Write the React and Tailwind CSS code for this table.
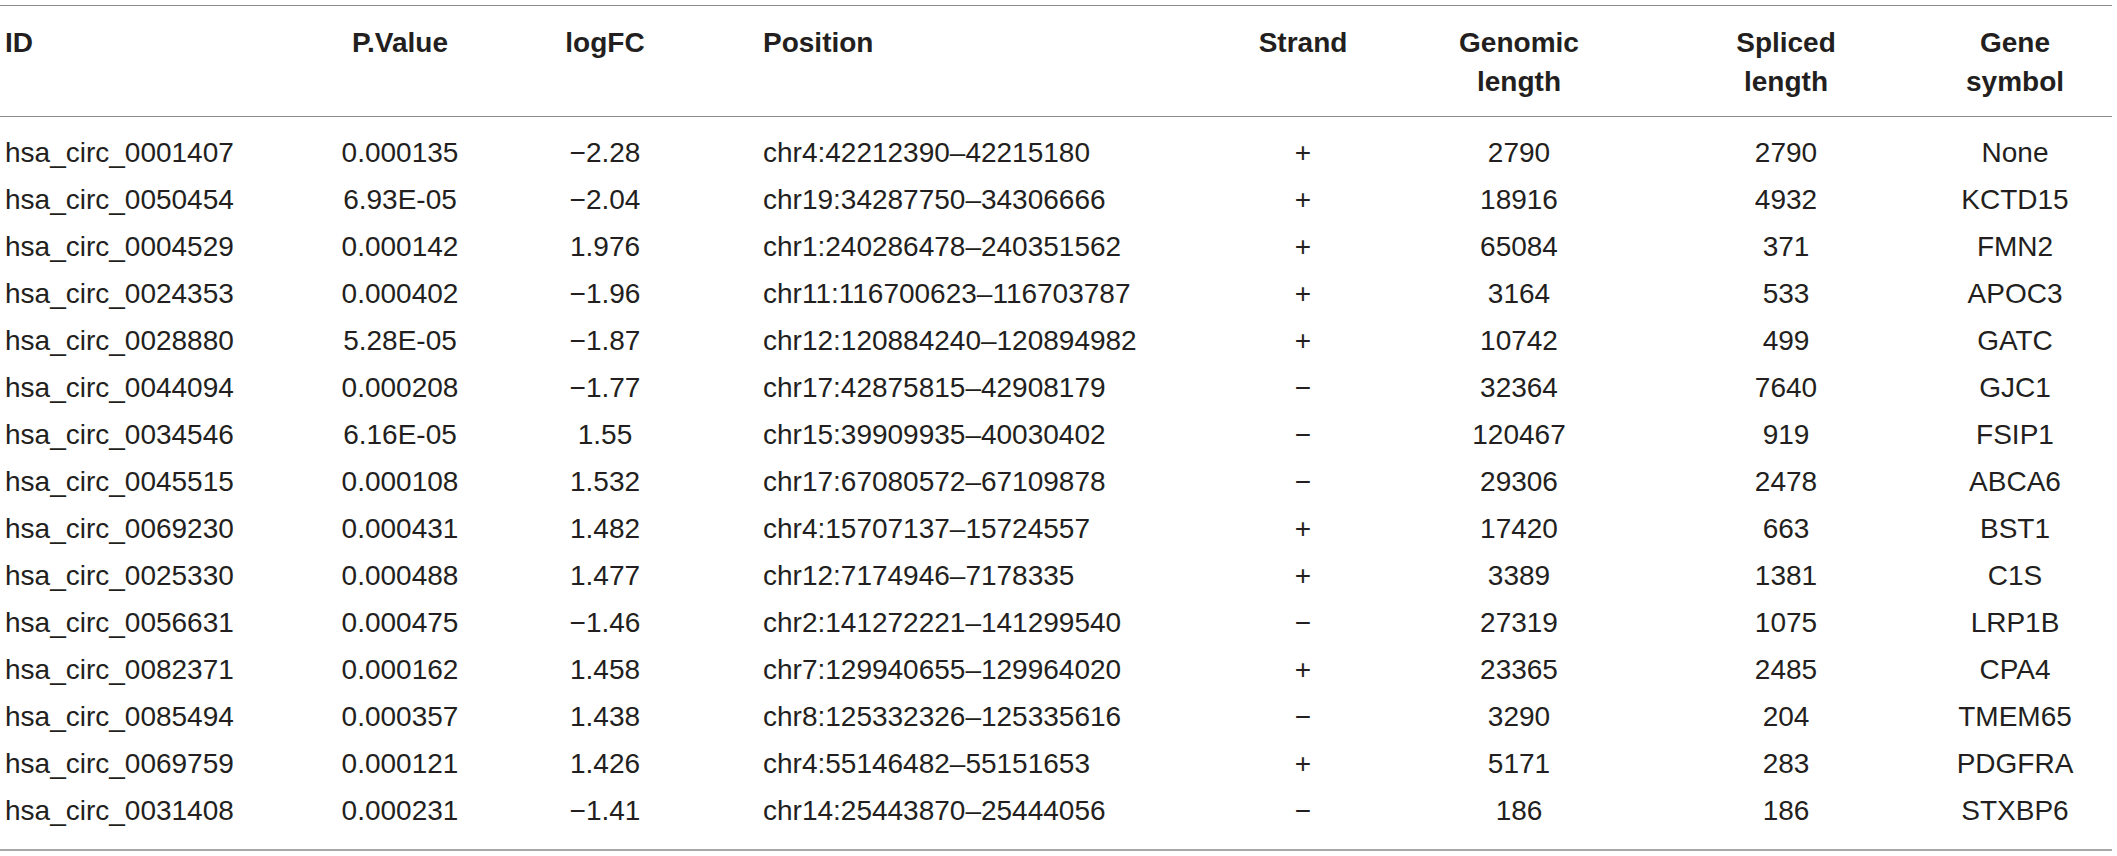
import React from 'react';

const cols = [
  { label: ['ID'], w: 'w-[300px]', cell: 'text-left pl-[5px]' },
  { label: ['P.Value'], w: 'w-[200px]', cell: 'text-center' },
  { label: ['logFC'], w: 'w-[210px]', cell: 'text-center' },
  { label: ['Position'], w: 'w-[490px]', cell: 'text-left pl-[53px]' },
  { label: ['Strand'], w: 'w-[206px]', cell: 'text-center' },
  { label: ['Genomic', 'length'], w: 'w-[226px]', cell: 'text-center' },
  { label: ['Spliced', 'length'], w: 'w-[308px]', cell: 'text-center' },
  { label: ['Gene', 'symbol'], w: 'w-[172px]', cell: 'text-center pr-[22px]' },
];

const rows = [
  ['hsa_circ_0001407', '0.000135', '−2.28', 'chr4:42212390–42215180', '+', '2790', '2790', 'None'],
  ['hsa_circ_0050454', '6.93E-05', '−2.04', 'chr19:34287750–34306666', '+', '18916', '4932', 'KCTD15'],
  ['hsa_circ_0004529', '0.000142', '1.976', 'chr1:240286478–240351562', '+', '65084', '371', 'FMN2'],
  ['hsa_circ_0024353', '0.000402', '−1.96', 'chr11:116700623–116703787', '+', '3164', '533', 'APOC3'],
  ['hsa_circ_0028880', '5.28E-05', '−1.87', 'chr12:120884240–120894982', '+', '10742', '499', 'GATC'],
  ['hsa_circ_0044094', '0.000208', '−1.77', 'chr17:42875815–42908179', '−', '32364', '7640', 'GJC1'],
  ['hsa_circ_0034546', '6.16E-05', '1.55', 'chr15:39909935–40030402', '−', '120467', '919', 'FSIP1'],
  ['hsa_circ_0045515', '0.000108', '1.532', 'chr17:67080572–67109878', '−', '29306', '2478', 'ABCA6'],
  ['hsa_circ_0069230', '0.000431', '1.482', 'chr4:15707137–15724557', '+', '17420', '663', 'BST1'],
  ['hsa_circ_0025330', '0.000488', '1.477', 'chr12:7174946–7178335', '+', '3389', '1381', 'C1S'],
  ['hsa_circ_0056631', '0.000475', '−1.46', 'chr2:141272221–141299540', '−', '27319', '1075', 'LRP1B'],
  ['hsa_circ_0082371', '0.000162', '1.458', 'chr7:129940655–129964020', '+', '23365', '2485', 'CPA4'],
  ['hsa_circ_0085494', '0.000357', '1.438', 'chr8:125332326–125335616', '−', '3290', '204', 'TMEM65'],
  ['hsa_circ_0069759', '0.000121', '1.426', 'chr4:55146482–55151653', '+', '5171', '283', 'PDGFRA'],
  ['hsa_circ_0031408', '0.000231', '−1.41', 'chr14:25443870–25444056', '−', '186', '186', 'STXBP6'],
];

export default function App() {
  return (
    <div className="min-h-[856px] bg-white pt-[5px] font-['Liberation_Sans',Arial,sans-serif] text-[28px] text-[#231f20]">
      <table className="w-[2112px] table-fixed border-collapse border-t border-t-[#8c8c8c] border-b-2 border-b-[#a8a8a8]">
        <colgroup>
          {cols.map((c, i) => (
            <col key={i} className={c.w} />
          ))}
        </colgroup>
        <thead>
          <tr className="border-b border-b-[#8c8c8c]">
            {cols.map((c, i) => (
              <th key={i} className={`${c.cell} align-top pt-[17px] pb-[15px] font-bold leading-[39px]`}>
                {c.label.map((l, j) => (
                  <div key={j}>{l}</div>
                ))}
              </th>
            ))}
          </tr>
        </thead>
        <tbody>
          {rows.map((r, i) => (
            <tr key={i}>
              {r.map((v, j) => (
                <td
                  key={j}
                  className={`${cols[j].cell} leading-[47px] whitespace-nowrap ${i === 0 ? 'pt-[12px]' : ''} ${i === rows.length - 1 ? 'pb-[15px]' : ''}`}
                >
                  {v}
                </td>
              ))}
            </tr>
          ))}
        </tbody>
      </table>
    </div>
  );
}
